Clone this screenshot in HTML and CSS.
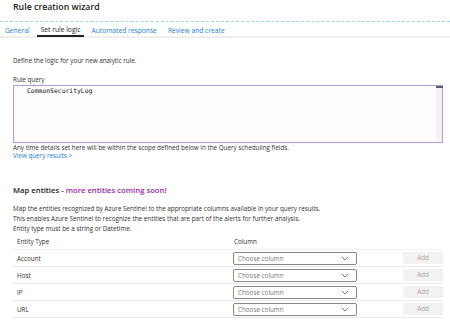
FILE: index.html
```html
<!DOCTYPE html>
<html>
<head>
<meta charset="utf-8">
<link rel="stylesheet" href="styles.css">
</head>
<body>
<div class="wz-header">Rule creation wizard</div>

<div class="wz-tabs">
  <span class="wz-tab">General</span>
  <span class="wz-tab wz-tab_active">Set rule logic</span>
  <span class="wz-tab">Automated response</span>
  <span class="wz-tab">Review and create</span>
</div>

<div class="wz-body">
  <div class="wz-intro">Define the logic for your new analytic rule.</div>

  <div class="wz-label">Rule query</div>
  <div class="wz-query">
    <div class="wz-query_text">CommonSecurityLog</div>
    <div class="wz-query_scroll"><span class="wz-query_thumb"></span></div>
  </div>
  <div class="wz-note">Any time details set here will be within the scope defined below in the Query scheduling fields.</div>
  <a href="#" class="wz-link">View query results &gt;</a>

  <div class="wz-heading">Map entities - <span class="wz-heading_soon">more entities coming soon!</span></div>

  <div class="wz-para">
    Map the entities recognized by Azure Sentinel to the appropriate columns available in your query results.<br>
    This enables Azure Sentinel to recognize the entities that are part of the alerts for further analysis.<br>
    Entity type must be a string or Datetime.
  </div>

  <div class="wz-table">
    <div class="wz-row wz-row_head">
      <div class="wz-cell_type">Entity Type</div>
      <div class="wz-cell_col">Column</div>
      <div></div>
    </div>
    <div class="wz-row">
      <div class="wz-cell_type">Account</div>
      <div class="wz-select">Choose column<svg class="wz-chev" viewBox="0 0 10 6"><path d="M1 1l4 4 4-4" /></svg></div>
      <div class="wz-add">Add</div>
    </div>
    <div class="wz-row">
      <div class="wz-cell_type">Host</div>
      <div class="wz-select">Choose column<svg class="wz-chev" viewBox="0 0 10 6"><path d="M1 1l4 4 4-4" /></svg></div>
      <div class="wz-add">Add</div>
    </div>
    <div class="wz-row">
      <div class="wz-cell_type">IP</div>
      <div class="wz-select">Choose column<svg class="wz-chev" viewBox="0 0 10 6"><path d="M1 1l4 4 4-4" /></svg></div>
      <div class="wz-add">Add</div>
    </div>
    <div class="wz-row">
      <div class="wz-cell_type">URL</div>
      <div class="wz-select">Choose column<svg class="wz-chev" viewBox="0 0 10 6"><path d="M1 1l4 4 4-4" /></svg></div>
      <div class="wz-add">Add</div>
    </div>
  </div>
</div>
</body>
</html>
```

FILE: styles.css
```css
body {
  margin: 0;
  background: #fff;
  font-family: "Open Sans", "Noto Sans", sans-serif;
  font-size: 6.3px;
  color: #323130;
}

.wz-header {
  height: 21px;
  padding-left: 13px;
  font-size: 8.8px;
  font-weight: 600;
  line-height: 15px;
  color: #222;
}

.wz-tabs {
  display: flex;
  align-items: stretch;
  height: 14px;
  padding-left: 5px;
  border-top: 1px dashed #9ad3ee;
  border-bottom: 2px solid #efefef;
}
.wz-tab {
  display: flex;
  align-items: center;
  padding: 2px 0 0;
  margin-right: 11px;
  font-size: 6.7px;
  color: #1a84d0;
}
.wz-tab_active {
  color: #222;
  padding: 2px 4px 0;
  margin-left: -4px;
  border-bottom: 2px solid #222;
  margin-bottom: -1px;
  margin-right: 7px;
}

.wz-body {
  padding: 0 7px 0 13px;
}

.wz-intro {
  margin-top: 19px;
  line-height: 8px;
}
.wz-label {
  margin-top: 11px;
  line-height: 8px;
}
.wz-query {
  display: flex;
  height: 56px;
  margin-top: 1px;
  border: 1px solid #c194d6;
  background: #fdfdfd;
}
.wz-query_text {
  flex: 1;
  padding: 1px 0 0 13px;
  font-family: "DejaVu Sans Mono", "Liberation Mono", monospace;
  font-size: 6.4px;
  line-height: 8px;
  color: #111;
}
.wz-query_scroll {
  width: 6px;
  background: #f3f3f3;
  position: relative;
}
.wz-query_thumb {
  position: absolute;
  top: 0;
  left: 0;
  right: -1px;
  height: 2px;
  background: #5e5a6e;
}
.wz-note {
  margin-top: 1px;
  line-height: 8px;
}
.wz-link {
  display: block;
  color: #1a7fd0;
  text-decoration: none;
  line-height: 8px;
}

.wz-heading {
  margin-top: 24px;
  font-size: 7.7px;
  font-weight: 600;
  line-height: 12px;
  color: #222;
}
.wz-heading_soon {
  color: #9b1fae;
}

.wz-para {
  margin-top: 8px;
  line-height: 10px;
}

.wz-row {
  display: grid;
  grid-template-columns: 220px 124px 1fr 40px;
  align-items: center;
  height: 16px;
  border-bottom: 1px solid #e8e8e8;
}
.wz-row_head {
  height: 15px;
  border-bottom-color: #f1f1f1;
}
.wz-row > div:last-child {
  grid-column: 4;
}
.wz-cell_type {
  padding-left: 4px;
}
.wz-cell_col {
  padding-left: 1px;
}
.wz-select {
  display: flex;
  align-items: center;
  justify-content: space-between;
  height: 11px;
  padding: 0 7px 0 4px;
  border: 1px solid #8a8886;
  border-radius: 2px;
  color: #777;
}
.wz-chev {
  width: 8px;
  height: 5px;
  fill: none;
  stroke: #555;
  stroke-width: 1;
}
.wz-add {
  height: 12px;
  line-height: 12px;
  text-align: center;
  background: #f3f2f1;
  color: #a8a6a4;
}
```
